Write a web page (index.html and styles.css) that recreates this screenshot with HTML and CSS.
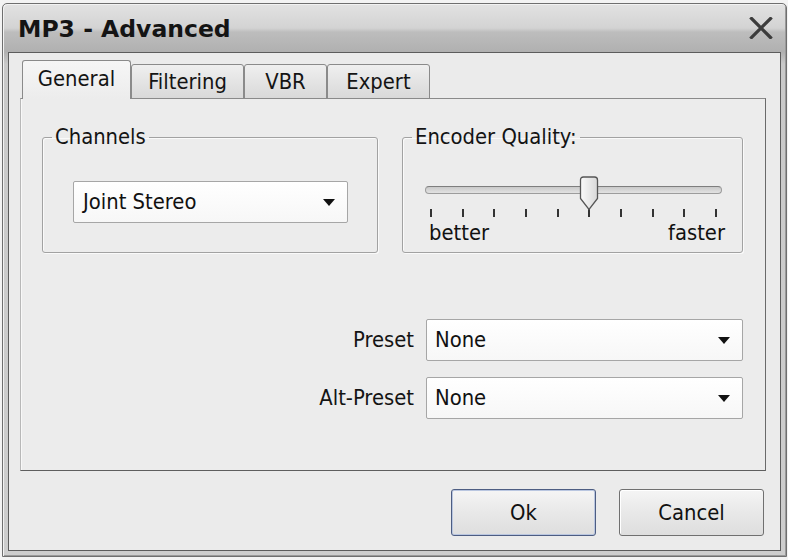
FILE: index.html
```html
<!DOCTYPE html>
<html>
<head>
<meta charset="utf-8">
<link rel="stylesheet" href="styles.css">
</head>
<body>
<div class="window">
  <div class="titlebar">
    <span class="title">MP3 - Advanced</span>
    <svg class="close" width="24" height="22" viewBox="0 0 24 22">
      <path d="M2.5 1.5 L21.5 20.5 M21.5 1.5 L2.5 20.5" stroke="#3c3c3c" stroke-width="3.2" stroke-linecap="square" fill="none"/>
    </svg>
  </div>
  <div class="client">
    <div class="tabs">
      <div class="tab sel t-general">General</div>
      <div class="tab t-filtering">Filtering</div>
      <div class="tab t-vbr">VBR</div>
      <div class="tab t-expert">Expert</div>
    </div>
    <div class="panel">
      <div class="groups">
        <fieldset class="group g-channels">
          <legend>Channels</legend>
          <div class="group-body channels-body">
            <div class="combo c-joint"><span>Joint Stereo</span><i class="arrow"></i></div>
          </div>
        </fieldset>
        <fieldset class="group g-quality">
          <legend>Encoder Quality:</legend>
          <div class="group-body quality-body">
            <div class="track-wrap">
              <div class="track"></div>
              <svg class="thumb" width="20" height="35" viewBox="0 0 20 35">
                <defs>
                  <linearGradient id="tg" x1="0" y1="0" x2="1" y2="0">
                    <stop offset="0" stop-color="#fafafa"/>
                    <stop offset="1" stop-color="#d8d8d8"/>
                  </linearGradient>
                </defs>
                <path d="M1.5 4 Q1.5 1 4.5 1 H15.5 Q18.5 1 18.5 4 V22.5 L10 33.5 L1.5 22.5 Z" fill="url(#tg)" stroke="#555" stroke-width="1.3"/>
              </svg>
            </div>
            <div class="ticks">
              <i></i><i></i><i></i><i></i><i></i><i></i><i></i><i></i><i></i><i></i>
            </div>
            <div class="scale"><span>better</span><span>faster</span></div>
          </div>
        </fieldset>
      </div>
      <div class="presets">
        <div class="prow">
          <span class="plabel">Preset</span>
          <div class="combo c-preset"><span>None</span><i class="arrow"></i></div>
        </div>
        <div class="prow">
          <span class="plabel">Alt-Preset</span>
          <div class="combo c-preset"><span>None</span><i class="arrow"></i></div>
        </div>
      </div>
    </div>
    <div class="buttons">
      <button class="btn ok">Ok</button>
      <button class="btn">Cancel</button>
    </div>
  </div>
</div>
</body>
</html>
```

FILE: styles.css
```css
* { box-sizing: border-box; }

html, body {
  margin: 0;
  padding: 0;
  background: #f3f3f3;
  font-family: "DejaVu Sans Condensed", "Liberation Sans", Arial, sans-serif;
  font-size: 21.8px;
  color: #111;
}

.window {
  margin: 3px 0 0 2px;
  width: 785px;
  height: 554px;
  border: 1px solid #6f6f6f;
  border-radius: 5px 5px 0 0;
  padding: 0 5px 5px 5px;
  background: linear-gradient(#e2e2e2 0px, #d3d3d3 24px, #bdbdbd 28px, #b0b0b0 48px, #c9c9c9 60px, #cdcdcd 100%);
  display: flex;
  flex-direction: column;
  box-shadow: inset 1px 1px 0 #f2f2f2, inset -1px -1px 0 #9a9a9a;
}

.titlebar {
  height: 48px;
  display: flex;
  align-items: center;
  justify-content: space-between;
  padding: 0 8px 0 10px;
}

.title {
  font-family: "DejaVu Sans", sans-serif;
  font-weight: bold;
  font-size: 23.5px;
  color: #141414;
  padding-top: 2px;
}

.close { display: block; }

.client {
  flex: 1;
  border: 1px solid #5c5c5c;
  background: #ebebeb;
  padding: 7px 14px 0 11px;
  display: flex;
  flex-direction: column;
}

.tabs {
  display: flex;
  align-items: flex-end;
  height: 39px;
  margin: 0 0 -1px 2px;
  position: relative;
  z-index: 2;
}

.tab {
  height: 35px;
  border: 1px solid #8a8a8a;
  border-radius: 3px 3px 0 0;
  background: linear-gradient(#efefef, #d9d9d9);
  text-align: center;
  line-height: 24px;
  padding-top: 5px;
  color: #141414;
}

.tab.sel {
  height: 39px;
  border-bottom: none;
  background: linear-gradient(#f6f6f6, #ececec);
  padding-top: 6px;
}

.t-general { width: 109px; }
.t-filtering { width: 113px; }
.t-vbr { width: 83px; }
.t-expert { width: 103px; }

.panel {
  height: 373px;
  border: 1px solid #8a8a8a;
  border-left-color: #b8b8b8;
  border-right-color: #6a6a6a;
  border-bottom-color: #5e5e5e;
  background: #ececec;
  padding: 28px 22px 0 21px;
  position: relative;
  z-index: 1;
  box-shadow: inset 1px 0 0 #f8f8f8;
}

.groups {
  display: flex;
  gap: 24px;
}

.group {
  margin: 0;
  padding: 0;
  min-width: 0;
  border: 1px solid #a2a2a2;
  border-radius: 3px;
  box-shadow: 1px 1px 0 #fafafa, inset 1px 1px 0 #fafafa;
}

.group legend {
  margin-left: 9px;
  padding: 0 3px;
  line-height: 20px;
  font-size: 21.8px;
  color: #141414;
}

.g-channels { width: 336px; }
.g-quality { width: 341px; }

.group-body { height: 105px; }

.channels-body {
  padding: 34px 30px 0 30px;
}

.combo {
  height: 42px;
  border: 1px solid #a6a6a6;
  border-radius: 2px;
  background: linear-gradient(#ffffff, #f7f7f7);
  display: flex;
  align-items: center;
  justify-content: space-between;
  padding: 0 12px 0 8px;
  line-height: 24px;
  color: #111;
}

.c-joint { width: 275px; padding-left: 9px; }

.arrow {
  display: block;
  width: 0;
  height: 0;
  border-left: 6px solid transparent;
  border-right: 6px solid transparent;
  border-top: 7px solid #111;
}

.quality-body {
  padding: 30px 20px 0 22px;
}

.track-wrap {
  position: relative;
  height: 17px;
  padding-top: 9px;
}

.track {
  height: 8px;
  border: 1px solid #9c9c9c;
  border-top-color: #7e7e7e;
  border-radius: 4px;
  background: linear-gradient(#c9c9c9, #e2e2e2);
}

.thumb {
  position: absolute;
  left: 154px;
  top: -1px;
}

.ticks {
  display: flex;
  justify-content: space-between;
  margin: 15px 5px 0 5px;
}

.ticks i {
  display: block;
  width: 2px;
  height: 8px;
  background: #333;
}

.scale {
  display: flex;
  justify-content: space-between;
  margin: 4px -3px 0 4px;
  line-height: 24px;
  color: #111;
}

.presets {
  margin-top: 66px;
  display: flex;
  flex-direction: column;
  align-items: flex-end;
  gap: 16px;
}

.prow {
  display: flex;
  align-items: center;
  gap: 12px;
}

.plabel {
  line-height: 24px;
  color: #141414;
}

.c-preset { width: 317px; }

.buttons {
  margin-top: 18px;
  display: flex;
  justify-content: flex-end;
  gap: 23px;
  padding-right: 2px;
}

.btn {
  width: 145px;
  height: 47px;
  border: 1px solid #707070;
  border-radius: 3px;
  background: linear-gradient(#f5f5f5, #e8e8e8 50%, #dedede);
  font-family: "DejaVu Sans Condensed", "Liberation Sans", Arial, sans-serif;
  font-size: 21.8px;
  color: #111;
  padding: 0;
  box-shadow: inset 1px 1px 0 #fff;
}

.btn.ok {
  border-color: #4d5d82;
  box-shadow: inset 0 0 0 1px #b9c6e0;
}
```
